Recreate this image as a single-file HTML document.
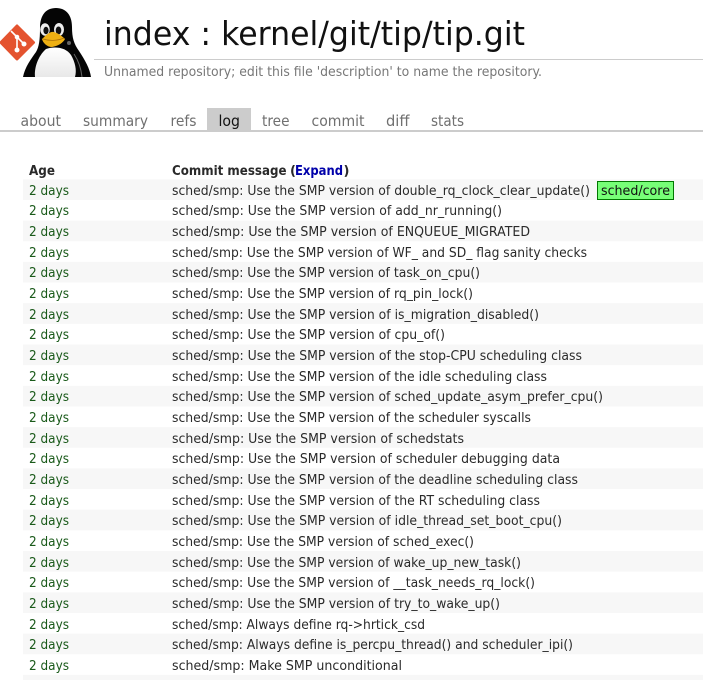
<!DOCTYPE html>
<html><head><meta charset="utf-8"><style>
html,body{margin:0;padding:0;background:#fff;width:703px;height:680px;overflow:hidden}
svg{display:block}
text{font-family:"DejaVu Sans",sans-serif;font-size:13px;fill:#2a2a2a}
.d{fill:#1a5a1a}
.t{font-size:15px;fill:#707070}
</style></head><body>
<svg width="703" height="680" viewBox="0 0 703 680" xmlns="http://www.w3.org/2000/svg">
<!-- git logo -->
<path d="M17 26 L33.500 42.500 L17 59 L1 42.500 Z" fill="#e4532f" stroke="#e4532f" stroke-width="3" stroke-linejoin="round"/>
<path d="M11 31 L17 37 L17 50 M17 37 L24 44" fill="none" stroke="#fff" stroke-width="1.6"/>
<circle cx="17" cy="37" r="2.300" fill="#fff"/><circle cx="17" cy="50" r="2.500" fill="#fff"/><circle cx="24" cy="44" r="2.500" fill="#fff"/>
<!-- tux -->
<defs><linearGradient id="b" x1="0" y1="0" x2="0" y2="1"><stop offset="0" stop-color="#fff"/><stop offset="1" stop-color="#e8e8e8"/></linearGradient></defs>
<path d="M23 77 C25 67 31 59 36 52 C39 47 40 40 40 28 C40 15 46 8 56 8 C66 8 72 15 72 27 C72 38 74 44 79 51 C85 60 90 69 91 77 Z" fill="#050505"/>
<path d="M35 77 C34 68 38 56 46 49 C54 46 66 47 71 55 C75 62 77 70 75 77 Z" fill="url(#b)"/>
<path d="M82 77 C81 68 78 60 74 54" fill="none" stroke="#666" stroke-width="1"/>
<ellipse cx="45" cy="29.500" rx="4.800" ry="6.200" fill="#eee"/>
<ellipse cx="59" cy="29.500" rx="5" ry="6.500" fill="#eee"/>
<ellipse cx="46" cy="30.500" rx="2.600" ry="3.800" fill="#111"/>
<ellipse cx="58.500" cy="30.500" rx="2.800" ry="4" fill="#111"/>
<path d="M42 39 C46 35 50 31 54 32 C58 33 63 37 65 39 C63 43 58 46 52 47 C47 47 43 43 42 39 Z" fill="#eeb013"/>
<path d="M43 39 C49 41 57 41 64 38" fill="none" stroke="#a86f08" stroke-width="0.8"/>
<circle cx="69" cy="43" r="2" fill="#666"/>
<!-- header -->
<text x="104" y="45" style="font-size:33px;fill:#111" textLength="421" lengthAdjust="spacingAndGlyphs">index : kernel/git/tip/tip.git</text>
<rect x="94" y="59" width="609" height="1" fill="#ccc"/>
<text x="104" y="76" style="font-size:13px;fill:#777" textLength="438" lengthAdjust="spacingAndGlyphs">Unnamed repository; edit this file 'description' to name the repository.</text>
<!-- tabs -->
<rect x="207" y="108" width="44" height="24" fill="#ccc"/>
<rect x="0" y="130" width="703" height="2" fill="#ccc"/>
<text class="t" x="20.500" y="126" textLength="40.500" lengthAdjust="spacingAndGlyphs">about</text>
<text class="t" x="83" y="126" textLength="65" lengthAdjust="spacingAndGlyphs">summary</text>
<text class="t" x="170.500" y="126" textLength="26" lengthAdjust="spacingAndGlyphs">refs</text>
<text class="t" x="218.500" y="126" style="fill:#111" textLength="21.500" lengthAdjust="spacingAndGlyphs">log</text>
<text class="t" x="262" y="126" textLength="27.500" lengthAdjust="spacingAndGlyphs">tree</text>
<text class="t" x="311.500" y="126" textLength="53" lengthAdjust="spacingAndGlyphs">commit</text>
<text class="t" x="386" y="126" textLength="23.500" lengthAdjust="spacingAndGlyphs">diff</text>
<text class="t" x="431" y="126" textLength="33" lengthAdjust="spacingAndGlyphs">stats</text>
<!-- table head -->
<text x="29" y="175" style="font-weight:bold" textLength="26" lengthAdjust="spacingAndGlyphs">Age</text>
<text x="172" y="175" style="font-weight:bold" textLength="114.500" lengthAdjust="spacingAndGlyphs">Commit message</text>
<text x="290" y="175" style="font-weight:bold">(</text>
<text x="295" y="175" style="font-weight:bold;fill:#0000aa" textLength="48" lengthAdjust="spacingAndGlyphs">Expand</text>
<text x="343.500" y="175" style="font-weight:bold">)</text>
<!-- row shading -->
<g fill="#f7f7f7">
<rect x="23" y="179.300" width="680" height="20.650"/>
<rect x="23" y="220.600" width="680" height="20.650"/>
<rect x="23" y="261.900" width="680" height="20.650"/>
<rect x="23" y="303.200" width="680" height="20.650"/>
<rect x="23" y="344.500" width="680" height="20.650"/>
<rect x="23" y="385.800" width="680" height="20.650"/>
<rect x="23" y="427.100" width="680" height="20.650"/>
<rect x="23" y="468.400" width="680" height="20.650"/>
<rect x="23" y="509.700" width="680" height="20.650"/>
<rect x="23" y="551" width="680" height="20.650"/>
<rect x="23" y="592.300" width="680" height="20.650"/>
<rect x="23" y="633.600" width="680" height="20.650"/>
<rect x="23" y="674.900" width="680" height="6"/>
</g>
<!-- decoration -->
<rect x="597.500" y="181.500" width="76" height="18" fill="#77ff77" stroke="#007700"/>
<text x="601" y="195" style="fill:#111" textLength="69" lengthAdjust="spacingAndGlyphs">sched/core</text>
<!-- rows -->
<g>
<text class="d" x="29" y="195" textLength="40" lengthAdjust="spacingAndGlyphs">2 days</text><text x="172" y="195" textLength="418" lengthAdjust="spacingAndGlyphs">sched/smp: Use the SMP version of double_rq_clock_clear_update()</text>
<text class="d" x="29" y="215" textLength="40" lengthAdjust="spacingAndGlyphs">2 days</text><text x="172" y="215" textLength="330" lengthAdjust="spacingAndGlyphs">sched/smp: Use the SMP version of add_nr_running()</text>
<text class="d" x="29" y="236" textLength="40" lengthAdjust="spacingAndGlyphs">2 days</text><text x="172" y="236" textLength="358" lengthAdjust="spacingAndGlyphs">sched/smp: Use the SMP version of ENQUEUE_MIGRATED</text>
<text class="d" x="29" y="257" textLength="40" lengthAdjust="spacingAndGlyphs">2 days</text><text x="172" y="257" textLength="415" lengthAdjust="spacingAndGlyphs">sched/smp: Use the SMP version of WF_ and SD_ flag sanity checks</text>
<text class="d" x="29" y="277" textLength="40" lengthAdjust="spacingAndGlyphs">2 days</text><text x="172" y="277" textLength="308" lengthAdjust="spacingAndGlyphs">sched/smp: Use the SMP version of task_on_cpu()</text>
<text class="d" x="29" y="298" textLength="40" lengthAdjust="spacingAndGlyphs">2 days</text><text x="172" y="298" textLength="301" lengthAdjust="spacingAndGlyphs">sched/smp: Use the SMP version of rq_pin_lock()</text>
<text class="d" x="29" y="319" textLength="40" lengthAdjust="spacingAndGlyphs">2 days</text><text x="172" y="319" textLength="367" lengthAdjust="spacingAndGlyphs">sched/smp: Use the SMP version of is_migration_disabled()</text>
<text class="d" x="29" y="339" textLength="40" lengthAdjust="spacingAndGlyphs">2 days</text><text x="172" y="339" textLength="273" lengthAdjust="spacingAndGlyphs">sched/smp: Use the SMP version of cpu_of()</text>
<text class="d" x="29" y="360" textLength="40" lengthAdjust="spacingAndGlyphs">2 days</text><text x="172" y="360" textLength="410" lengthAdjust="spacingAndGlyphs">sched/smp: Use the SMP version of the stop-CPU scheduling class</text>
<text class="d" x="29" y="381" textLength="40" lengthAdjust="spacingAndGlyphs">2 days</text><text x="172" y="381" textLength="375" lengthAdjust="spacingAndGlyphs">sched/smp: Use the SMP version of the idle scheduling class</text>
<text class="d" x="29" y="401" textLength="40" lengthAdjust="spacingAndGlyphs">2 days</text><text x="172" y="401" textLength="431" lengthAdjust="spacingAndGlyphs">sched/smp: Use the SMP version of sched_update_asym_prefer_cpu()</text>
<text class="d" x="29" y="422" textLength="40" lengthAdjust="spacingAndGlyphs">2 days</text><text x="172" y="422" textLength="359" lengthAdjust="spacingAndGlyphs">sched/smp: Use the SMP version of the scheduler syscalls</text>
<text class="d" x="29" y="443" textLength="40" lengthAdjust="spacingAndGlyphs">2 days</text><text x="172" y="443" textLength="292" lengthAdjust="spacingAndGlyphs">sched/smp: Use the SMP version of schedstats</text>
<text class="d" x="29" y="463" textLength="40" lengthAdjust="spacingAndGlyphs">2 days</text><text x="172" y="463" textLength="388" lengthAdjust="spacingAndGlyphs">sched/smp: Use the SMP version of scheduler debugging data</text>
<text class="d" x="29" y="484" textLength="40" lengthAdjust="spacingAndGlyphs">2 days</text><text x="172" y="484" textLength="406" lengthAdjust="spacingAndGlyphs">sched/smp: Use the SMP version of the deadline scheduling class</text>
<text class="d" x="29" y="505" textLength="40" lengthAdjust="spacingAndGlyphs">2 days</text><text x="172" y="505" textLength="368" lengthAdjust="spacingAndGlyphs">sched/smp: Use the SMP version of the RT scheduling class</text>
<text class="d" x="29" y="525" textLength="40" lengthAdjust="spacingAndGlyphs">2 days</text><text x="172" y="525" textLength="390" lengthAdjust="spacingAndGlyphs">sched/smp: Use the SMP version of idle_thread_set_boot_cpu()</text>
<text class="d" x="29" y="546" textLength="40" lengthAdjust="spacingAndGlyphs">2 days</text><text x="172" y="546" textLength="302" lengthAdjust="spacingAndGlyphs">sched/smp: Use the SMP version of sched_exec()</text>
<text class="d" x="29" y="567" textLength="40" lengthAdjust="spacingAndGlyphs">2 days</text><text x="172" y="567" textLength="349" lengthAdjust="spacingAndGlyphs">sched/smp: Use the SMP version of wake_up_new_task()</text>
<text class="d" x="29" y="587" textLength="40" lengthAdjust="spacingAndGlyphs">2 days</text><text x="172" y="587" textLength="363" lengthAdjust="spacingAndGlyphs">sched/smp: Use the SMP version of __task_needs_rq_lock()</text>
<text class="d" x="29" y="608" textLength="40" lengthAdjust="spacingAndGlyphs">2 days</text><text x="172" y="608" textLength="328" lengthAdjust="spacingAndGlyphs">sched/smp: Use the SMP version of try_to_wake_up()</text>
<text class="d" x="29" y="629" textLength="40" lengthAdjust="spacingAndGlyphs">2 days</text><text x="172" y="629" textLength="253" lengthAdjust="spacingAndGlyphs">sched/smp: Always define rq-&gt;hrtick_csd</text>
<text class="d" x="29" y="649" textLength="40" lengthAdjust="spacingAndGlyphs">2 days</text><text x="172" y="649" textLength="401" lengthAdjust="spacingAndGlyphs">sched/smp: Always define is_percpu_thread() and scheduler_ipi()</text>
<text class="d" x="29" y="670" textLength="40" lengthAdjust="spacingAndGlyphs">2 days</text><text x="172" y="670" textLength="230" lengthAdjust="spacingAndGlyphs">sched/smp: Make SMP unconditional</text>
</g>
</svg>
</body></html>
